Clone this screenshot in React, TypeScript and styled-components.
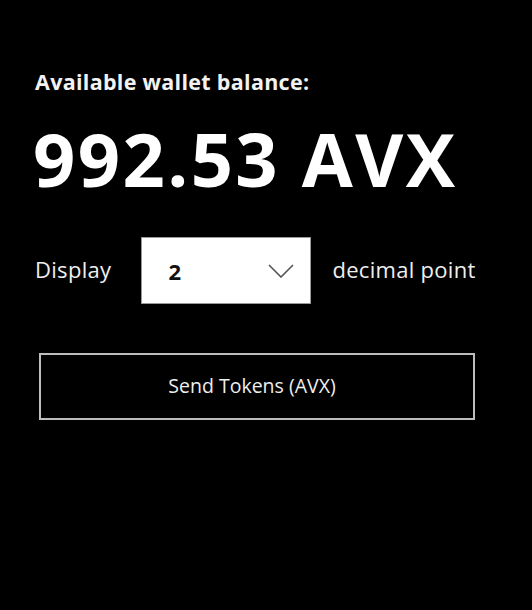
import React from "react";
import styled, { createGlobalStyle } from "styled-components";

const Global = createGlobalStyle`
  html, body { margin: 0; padding: 0; background: #000; }
  body { font-family: "Open Sans", "Noto Sans", sans-serif; color: #fff; }
`;

const Page = styled.div`
  width: 532px;
  height: 610px;
  background: #000;
  box-sizing: border-box;
  padding: 67px 20px 0 35px;
  display: flex;
  flex-direction: column;
`;

const Label = styled.div`
  font-size: 21.5px;
  font-weight: 700;
  line-height: 30px;
  letter-spacing: 0.3px;
  color: #f2f2f2;
`;

const Balance = styled.div`
  font-size: 74px;
  font-weight: 700;
  line-height: 90px;
  letter-spacing: 2.4px;
  margin-top: 17px;
  margin-left: -2px;
`;

const Row = styled.div`
  display: flex;
  align-items: center;
  margin-top: 33px;
`;

const RowText = styled.span`
  font-size: 22px;
  letter-spacing: 0.3px;
  color: #eee;
  line-height: 28px;
  white-space: nowrap;
  margin-top: -3px;
`;

const Select = styled.div`
  width: 170px;
  height: 67px;
  flex-shrink: 0;
  box-sizing: border-box;
  background: #fff;
  border: 1px solid #999;
  display: flex;
  align-items: center;
  justify-content: space-between;
  padding: 0 16px 0 26px;
  margin: 0 21px 0 30px;
  color: #111;
  font-size: 22px;
  font-weight: 700;
`;

const Button = styled.button`
  margin-top: 49px;
  margin-left: 4px;
  width: 436px;
  height: 67px;
  background: #000;
  border: 2px solid #bdbdbd;
  color: #eee;
  font-family: "Open Sans", "Noto Sans", sans-serif;
  font-size: 19.5px;
  padding: 0 10px 2px 0;
  cursor: pointer;
`;

export default function App() {
  return (
    <>
      <Global />
      <Page>
        <Label>Available wallet balance:</Label>
        <Balance>992.53 AVX</Balance>
        <Row>
          <RowText>Display</RowText>
          <Select>
            <span>2</span>
            <svg width="26" height="14" viewBox="0 0 26 14">
              <polyline points="1,1 13,13 25,1" fill="none" stroke="#555" strokeWidth="1.6" />
            </svg>
          </Select>
          <RowText>decimal point</RowText>
        </Row>
        <Button>Send Tokens (AVX)</Button>
      </Page>
    </>
  );
}
